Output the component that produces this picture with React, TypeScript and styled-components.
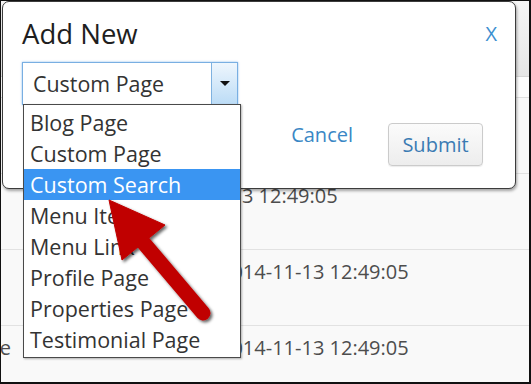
import React from "react";
import styled, { createGlobalStyle } from "styled-components";

const Global = createGlobalStyle`
  html, body { margin: 0; padding: 0; background: #ffffff; }
  * { box-sizing: border-box; }
  body { font-family: "Open Sans", "Liberation Sans", sans-serif; }
`;

const Frame = styled.div`
  position: relative;
  width: 531px;
  height: 384px;
  border-style: solid;
  border-color: #111;
  border-width: 1px 2px 2px 1px;
  background: #f9f9f9;
  overflow: hidden;
  display: flex;
  flex-direction: column;
`;

const TableHead = styled.div`
  height: 76px;
  flex: none;
  background: linear-gradient(#f6f6f6, #e6e6e6);
  border-bottom: 1px solid #d6d6d6;
`;

const FilterBand = styled.div`
  height: 21px;
  flex: none;
  background: #fdfdfd;
  border-bottom: 1px solid #e0e0e0;
`;

const Row = styled.div`
  height: 76px;
  flex: none;
  display: grid;
  grid-template-columns: 10px 1fr;
  column-gap: 209px;
  padding-top: 10px;
  border-bottom: 1px solid #e2e2e2;
  background: #f9f9f9;
  font-size: 20px;
  line-height: 24px;
  color: #4d4d4d;
  white-space: nowrap;
`;

const NameCell = styled.div`
  overflow: hidden;
  display: flex;
  justify-content: flex-end;
`;

const DateCell = styled.div<{ $shift: number }>`
  margin-left: ${(p) => p.$shift}px;
`;

const Modal = styled.div`
  position: absolute;
  left: 1px;
  top: 0;
  width: 514px;
  background: #fff;
  border: 1px solid #3c3c3c;
  border-radius: 7px;
  box-shadow: 1px 2px 3px rgba(0, 0, 0, 0.35);
  padding: 16px 19px 22px 19px;
  display: flex;
  flex-direction: column;
`;

const Header = styled.div`
  display: flex;
  justify-content: space-between;
  align-items: center;
  height: 32px;
`;

const Title = styled.h2`
  margin: 0;
  font-weight: 400;
  font-size: 27.5px;
  line-height: 34px;
  color: #1e1e1e;
`;

const Close = styled.span`
  font-size: 20px;
  line-height: 32px;
  color: #3b8fd0;
  margin-right: -1px;
`;

const SelectWrap = styled.div`
  position: relative;
  margin-top: 12px;
  width: 216px;
  height: 43px;
  border: 1px solid #79afe2;
  box-shadow: 0 0 2px rgba(90, 160, 230, 0.7);
  display: flex;
  background: #fff;
`;

const SelectValue = styled.div`
  flex: 1;
  padding-left: 10px;
  font-size: 21.4px;
  line-height: 41px;
  color: #333;
`;

const SelectButton = styled.div`
  width: 26px;
  border-left: 1px solid #7fb2e0;
  background: linear-gradient(#eef6fd, #bcdcf6);
  display: flex;
  align-items: center;
  justify-content: center;
`;

const Caret = styled.div`
  width: 0;
  height: 0;
  border-left: 5px solid transparent;
  border-right: 5px solid transparent;
  border-top: 5px solid #111;
  margin-top: -1px;
`;

const List = styled.ul`
  position: absolute;
  top: 100%;
  left: 0;
  margin: 0;
  padding: 2px 0;
  list-style: none;
  width: 218px;
  background: #fff;
  border: 1px solid #4a4a4a;
  box-shadow: 1px 1px 2px rgba(0, 0, 0, 0.3);
  z-index: 2;
`;

const Item = styled.li<{ $active?: boolean }>`
  height: 31px;
  padding-left: 6px;
  font-size: 21.5px;
  line-height: 31px;
  white-space: nowrap;
  color: ${(p) => (p.$active ? "#fff" : "#333")};
  background: ${(p) => (p.$active ? "#3a95f2" : "transparent")};
`;

const Footer = styled.div`
  margin-top: 18px;
  display: flex;
  justify-content: flex-end;
  align-items: flex-start;
  gap: 35px;
  padding-right: 13px;
`;

const CancelLink = styled.a`
  font-size: 20px;
  line-height: 24px;
  color: #3a87c5;
  text-decoration: none;
`;

const SubmitButton = styled.button`
  height: 43px;
  width: 95px;
  padding: 0;
  font-family: "Open Sans", "Liberation Sans", sans-serif;
  font-size: 20px;
  color: #3b7bb3;
  background: linear-gradient(#fbfbfb, #ededed);
  border: 1px solid #cbcbcb;
  border-radius: 4px;
  box-shadow: 0 1px 1px rgba(0, 0, 0, 0.08);
`;

const ArrowLayer = styled.svg`
  position: absolute;
  left: 0;
  top: 0;
  z-index: 3;
  pointer-events: none;
  overflow: visible;
`;

const options = [
  "Blog Page",
  "Custom Page",
  "Custom Search",
  "Menu Item",
  "Menu Link",
  "Profile Page",
  "Properties Page",
  "Testimonial Page",
];

const rows = [
  { name: "", date: "", shift: 0 },
  { name: "", date: "2014-11-13 12:49:05", shift: -71 },
  { name: "", date: "2014-11-13 12:49:05", shift: 0 },
  { name: "Testimonial Page", date: "2014-11-13 12:49:05", shift: 0 },
];

export default function App() {
  return (
    <>
      <Global />
      <Frame>
        <TableHead />
        <FilterBand />
        {rows.map((r, i) => (
          <Row key={i}>
            <NameCell>{r.name}</NameCell>
            <DateCell $shift={r.shift}>{r.date}</DateCell>
          </Row>
        ))}
        <Modal>
          <Header>
            <Title>Add New</Title>
            <Close>X</Close>
          </Header>
          <SelectWrap>
            <SelectValue>Custom Page</SelectValue>
            <SelectButton>
              <Caret />
            </SelectButton>
            <List>
              {options.map((o) => (
                <Item key={o} $active={o === "Custom Search"}>
                  {o}
                </Item>
              ))}
            </List>
          </SelectWrap>
          <Footer>
            <CancelLink>Cancel</CancelLink>
            <SubmitButton>Submit</SubmitButton>
          </Footer>
        </Modal>
        <ArrowLayer width="529" height="382" viewBox="1 1 529 382">
          <defs>
            <filter id="sh" x="-20%" y="-20%" width="140%" height="140%">
              <feDropShadow dx="2" dy="2" stdDeviation="1.8" floodColor="#000" floodOpacity="0.6" />
            </filter>
          </defs>
          <g filter="url(#sh)" fill="#c00000" stroke="#c00000">
            <line x1="142" y1="241" x2="203" y2="313" strokeWidth="15" strokeLinecap="round" />
            <polygon points="109,200 122,260 165,225" strokeWidth="1" strokeLinejoin="round" />
          </g>
        </ArrowLayer>
      </Frame>
    </>
  );
}
